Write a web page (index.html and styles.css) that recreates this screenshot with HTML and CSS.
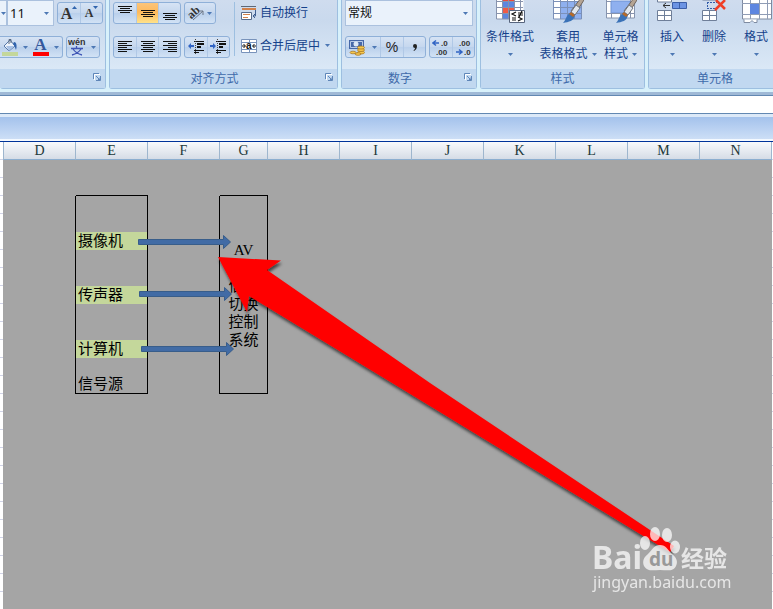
FILE: index.html
```html
<!DOCTYPE html>
<html lang="zh-CN">
<head>
<meta charset="utf-8">
<title>工作表</title>
<link rel="stylesheet" href="styles.css">
</head>
<body>
<svg class="defs" aria-hidden="true">
  <symbol id="drop" viewBox="0 0 5 3"><path d="M0 0h5L2.5 3z" fill="#4d78b4"/></symbol>
  <symbol id="launch" viewBox="0 0 8 8"><path d="M.5 6V.5H6" fill="none" stroke="#5f86b8"/><path d="M1.500 7V1.500H7" fill="none" stroke="#fff"/><path d="M3 3l3 3M7.500 3v4.500H3M5 6.500h2V4.500" fill="none" stroke="#5f86b8"/></symbol>
</svg>
<div class="ribbon">
  <section class="group font">
    <div class="tools">
      <div class="row">
        <button class="combo stub" aria-label="字体"><svg class="drop"><use href="#drop"/></svg></button>
        <label class="combo size"><select aria-label="字号"><option>11</option></select><svg class="drop"><use href="#drop"/></svg></label>
        <div class="seg wide">
          <button aria-label="增大字号"><b class="grow">A</b><svg class="tri" viewBox="0 0 5 3"><path d="M0 3h5L2.500 0z" fill="#3164ad"/></svg></button>
          <button aria-label="减小字号"><b class="shrink">A</b><svg class="tri" viewBox="0 0 5 3"><path d="M0 0h5L2.500 3z" fill="#3164ad"/></svg></button>
        </div>
      </div>
      <div class="row">
        <div class="seg open">
          <button aria-label="填充颜色"><svg width="18" height="18" viewBox="0 0 18 18"><path d="M3 8l6-6 5 6-6 5z" fill="#edf3fb" stroke="#5678a8"/><path d="M5 8h8l-5 5z" fill="#a8c2e6"/><path d="M8 6V1.500h2V5" fill="none" stroke="#5b6a80"/><path d="M13 4c3 0 3 5 2 8-1-2-1-4-3-6z" fill="#3164ad"/><path d="M1 14h16v4H1z" fill="#c4d79b"/></svg></button>
          <button class="mini" aria-label="填充颜色选项"><svg class="drop"><use href="#drop"/></svg></button>
          <button aria-label="字体颜色"><span class="ink">A</span></button>
          <button class="mini" aria-label="字体颜色选项"><svg class="drop"><use href="#drop"/></svg></button>
        </div>
        <div class="seg">
          <button class="pinyin" aria-label="拼音"><svg width="18" height="18" viewBox="0 0 18 18"><text x="0" y="7" class="wen">wén</text><path d="M3 10.500h12M8.500 8v2M5 11c2 3 5 5 9 6M13 11c-2 3-5 5-9 6" fill="none" stroke="#3f55b5" stroke-width="1.300"/></svg></button>
          <button class="mini" aria-label="拼音选项"><svg class="drop"><use href="#drop"/></svg></button>
        </div>
      </div>
    </div>
    <div class="caption"><button class="launch" aria-label="字体设置"><svg><use href="#launch"/></svg></button></div>
  </section>

  <section class="group align">
    <div class="tools cols">
      <div class="stack">
        <div class="row">
          <div class="seg wide">
            <button aria-label="顶端对齐"><svg width="16" height="16" viewBox="0 0 16 16"><path d="M1 1.500h14M3 3.500h10M1 5.500h14M3 7.500h10" stroke="#111"/></svg></button>
            <button class="on" aria-label="垂直居中"><svg width="16" height="16" viewBox="0 0 16 16"><path d="M1 5.500h14M3 7.500h10M1 9.500h14M3 11.500h10" stroke="#111"/></svg></button>
            <button aria-label="底端对齐"><svg width="16" height="16" viewBox="0 0 16 16"><path d="M1 8.500h14M3 10.500h10M1 12.500h14M3 14.500h10" stroke="#111"/></svg></button>
          </div>
          <div class="seg">
            <button class="orient" aria-label="方向"><svg width="28" height="20" viewBox="0 0 28 20"><text x="2" y="14" transform="rotate(-42 7 11)" class="ab">ab</text><path d="M7 17l10-9M13 8h4v4" fill="none" stroke="#6d7686"/><path d="M21 9h5l-2.500 3z" fill="#4d78b4"/></svg></button>
          </div>
        </div>
        <div class="row">
          <div class="seg wide">
            <button aria-label="左对齐"><svg width="16" height="16" viewBox="0 0 16 16"><path d="M1 2.500h14M1 4.500h9M1 6.500h14M1 8.500h9M1 10.500h14M1 12.500h9" stroke="#111"/></svg></button>
            <button aria-label="居中"><svg width="16" height="16" viewBox="0 0 16 16"><path d="M1 2.500h14M3 4.500h10M1 6.500h14M3 8.500h10M1 10.500h14M3 12.500h10" stroke="#111"/></svg></button>
            <button aria-label="右对齐"><svg width="16" height="16" viewBox="0 0 16 16"><path d="M1 2.500h14M6 4.500h9M1 6.500h14M6 8.500h9M1 10.500h14M6 12.500h9" stroke="#111"/></svg></button>
          </div>
          <div class="seg wide">
            <button aria-label="减少缩进"><svg width="17" height="16" viewBox="0 0 17 16"><path d="M6 2.500h10M6 11.500h10M6 13.500h5" stroke="#111"/><path d="M9 5h7M9 8h4" stroke="#111" stroke-width="2"/><path d="M7.500 0v16" stroke="#444" stroke-dasharray="1 1"/><path d="M0 7l3-3v2h3v2H3v2z" fill="#3164c4"/></svg></button>
            <button aria-label="增加缩进"><svg width="17" height="16" viewBox="0 0 17 16"><path d="M6 2.500h10M6 11.500h10M6 13.500h5" stroke="#111"/><path d="M9 5h7M9 8h4" stroke="#111" stroke-width="2"/><path d="M7.500 0v16" stroke="#444" stroke-dasharray="1 1"/><path d="M6 7L3 4v2H0v2h3v2z" fill="#3164c4"/></svg></button>
          </div>
        </div>
      </div>
      <div class="stack sep">
        <div class="row"><button class="text"><svg width="16" height="16" viewBox="0 0 16 16"><path d="M0 1.500h15" stroke="#5d6878"/><path d="M1 4h14" stroke="#d2824c" stroke-width="2"/><path d="M.5 7.500h10v7H.5z" fill="#fff" stroke="#566b8a"/><path d="M2 9.500h7M2 12.500h5" stroke="#d2824c"/><path d="M14.500 5v6h-2M14 9l-2 2 2 2" fill="none" stroke="#3f5f91"/></svg>自动换行</button></div>
        <div class="row"><button class="text"><svg width="16" height="16" viewBox="0 0 16 16"><path d="M.5 1.500h15v13H.5zM.5 4.500h15M.5 11.500h15M8.500 1.500v3M8.500 11.500v3" fill="#fff" stroke="#7893bb"/><path d="M1 8h3M12 8h3M2.500 6l2 2-2 2M13.500 6l-2 2 2 2" fill="none" stroke="#111"/><text x="5" y="11" class="tiny">a</text></svg>合并后居中<svg class="drop"><use href="#drop"/></svg></button></div>
      </div>
    </div>
    <div class="caption has-launch">对齐方式<button class="launch" aria-label="对齐设置"><svg><use href="#launch"/></svg></button></div>
  </section>

  <section class="group number">
    <div class="tools">
      <div class="row"><label class="combo format"><select aria-label="数字格式"><option>常规</option></select><svg class="drop"><use href="#drop"/></svg></label></div>
      <div class="row">
        <div class="seg wide">
          <button aria-label="会计数字格式"><svg width="18" height="18" viewBox="0 0 18 18"><path d="M1 2h15v9H1z" fill="#4668a8"/><path d="M2.500 3.500h12v6h-12z" fill="none" stroke="#b9cbe8"/><circle cx="8" cy="6" r="2.500" fill="#dce7f6"/><g fill="#f6c74d" stroke="#a2701b" stroke-width=".7"><ellipse cx="13" cy="14.500" rx="3.500" ry="1.500"/><ellipse cx="13" cy="12" rx="3.500" ry="1.500"/><ellipse cx="13" cy="9.500" rx="3.500" ry="1.500"/><ellipse cx="5" cy="14.500" rx="3" ry="1.300"/><ellipse cx="10" cy="16" rx="3" ry="1.300"/></g></svg></button>
          <button class="mini" aria-label="会计格式选项"><svg class="drop"><use href="#drop"/></svg></button>
          <button class="percent">%</button>
          <button class="comma" aria-label="千位分隔样式"><svg width="8" height="10" viewBox="0 0 8 10"><path d="M4 2a2 2 0 0 1 2 2c0 2-1 4-3 5l-.5-.7C3.500 7.500 4 7 4 6a2 2 0 0 1 0-4z" fill="#222"/></svg></button>
        </div>
        <div class="seg wide">
          <button aria-label="增加小数位数"><svg width="18" height="18" viewBox="0 0 18 18"><path d="M1 5h6M4 2.500L1 5l3 2.500" fill="none" stroke="#3164c4" stroke-width="1.500"/><text x="9" y="8" class="dec">.0</text><text x="4" y="17" class="dec">.00</text></svg></button>
          <button aria-label="减少小数位数"><svg width="18" height="18" viewBox="0 0 18 18"><text x="4" y="8" class="dec">.00</text><text x="9" y="17" class="dec">.0</text><path d="M1 14h6M4 11.500L7 14l-3 2.500" fill="none" stroke="#3164c4" stroke-width="1.500"/></svg></button>
        </div>
      </div>
    </div>
    <div class="caption has-launch">数字<button class="launch" aria-label="数字设置"><svg><use href="#launch"/></svg></button></div>
  </section>

  <section class="group style">
    <div class="tools big">
      <button class="tile"><svg width="32" height="23" viewBox="0 0 32 23"><path d="M2.500-6h27v25h-27z" fill="#fff"/><path d="M8-3h12v5H8z" fill="#e8493c"/><path d="M8 2h12v6H8z" fill="#5d86e0"/><path d="M8 8h12v5H8z" fill="#ef5a46"/><path d="M8 13h7v6H8z" fill="#5d86e0"/><path d="M2.500 0v19h20M8.500 0v19M14.500 0v19M20.500 0v19M26.500 0v12M2 1.500h27M2 7.500h27M2 13.500h20" fill="none" stroke="#8793ad"/><path d="M15.500 10.500h15v12h-15z" fill="#fff" stroke="#56647d"/><path d="M22 12l-4 2 4 2M18 18h4M18 20h4M24 13h5M24 15h5M28 11l-3 6M24 17l4 2-4 2" fill="none" stroke="#111" stroke-width="1.200"/></svg><span>条件格式</span><svg class="drop low"><use href="#drop"/></svg></button>
      <button class="tile wider"><svg width="32" height="23" viewBox="0 0 32 23"><path d="M1.500-3h28v22h-28z" fill="#fff"/><path d="M8 1h22v18H8z" fill="#8fb0ef"/><path d="M1.500 0v19h28V0M8.500 0v19M15.500 0v19M22.500 0v19M1 1.500h28M1 7.500h28M1 13.500h28" fill="none" stroke="#7b90b8"/><path d="M29-2l3 2-9 14-4-3z" fill="#b5a493" stroke="#6f655e"/><path d="M24 5l4 3-5 7-4-3z" fill="#e2e6ec" stroke="#6c7480"/><path d="M19 12l4 3c-1 6-6 7-12 8 3-3 3-8 8-11z" fill="#3b72b7"/><path d="M19 12l4 3-2 2-4-3z" fill="#b86a28"/></svg><span>套用</span><span>表格格式<svg class="drop"><use href="#drop"/></svg></span></button>
      <button class="tile narrow"><svg width="32" height="23" viewBox="0 0 32 23"><path d="M1.500-3h28v21h-28z" fill="#fff" stroke="#8694ae"/><path d="M6 1h19v12H6z" fill="#8fb0ef" stroke="#6f92d4"/><path d="M1 1.500h5M1 13.500h28M6.500 13v5M25.500 0v18M15.500 13v5" stroke="#8793ad"/><path d="M29-2l3 2-9 14-4-3z" fill="#b5a493" stroke="#6f655e"/><path d="M24 5l4 3-5 7-4-3z" fill="#e2e6ec" stroke="#6c7480"/><path d="M19 12l4 3c-1 6-6 7-12 8 3-3 3-8 8-11z" fill="#3b72b7"/><path d="M19 12l4 3-2 2-4-3z" fill="#b86a28"/></svg><span>单元格</span><span>样式<svg class="drop"><use href="#drop"/></svg></span></button>
    </div>
    <div class="caption">样式</div>
  </section>

  <section class="group cells">
    <div class="tools big">
      <button class="tile cell"><svg width="32" height="23" viewBox="0 0 32 23"><path d="M1.500-4v6h14v-6M1.500 10.500h14v10h-14zM1.500 15.500h14M8.500 10v10" fill="#fff" stroke="#6f7f99"/><path d="M16.500 2.500h14v6h-14zM23.500 2v6" fill="#6c94e4" stroke="#3c5fa8"/><path d="M7 5.500h7M10 3L7 5.500 10 8" fill="none" stroke="#333"/></svg><span>插入</span><svg class="drop low"><use href="#drop"/></svg></button>
      <button class="tile cell"><svg width="32" height="23" viewBox="0 0 32 23"><path d="M4.500 10.500h14v10h-14zM4.500 15.500h14M11.500 10v10" fill="#fff" stroke="#6f7f99"/><path d="M4.500-4v4h14v-4" fill="#fff" stroke="#6f7f99"/><path d="M9 2.500h10M9 8.500h10M9.500 2v6" fill="none" stroke="#335ca8" stroke-dasharray="2 1"/><path d="M18 0l9 9M27 0L17 10" stroke="#ef3f27" stroke-width="2.500"/></svg><span>删除</span><svg class="drop low"><use href="#drop"/></svg></button>
      <button class="tile cell"><svg width="32" height="23" viewBox="0 0 32 23"><path d="M2.500-4h29v23h-29z" fill="#fff" stroke="#7f8ba1"/><path d="M2 3.500h29M2 14.500h29M10.500 0v19M19.500 0v19M27.500 0v19" stroke="#8f9cb5"/><path d="M10 4h9v10h-9z" fill="#5d86e0"/><path d="M4 19.500v3h6l2-2 2 2h3v-3" fill="#fff" stroke="#7f8ba1"/></svg><span>格式</span><svg class="drop low"><use href="#drop"/></svg></button>
    </div>
    <div class="caption">单元格</div>
  </section>
</div>
<div class="formula"></div>
<div class="titlebar"></div>
<main class="sheet">
  <div class="grid">
  <table>
    <colgroup><col class="first"><col class="w"><col class="w"><col class="g"><col class="w"><col class="w"><col class="w"><col class="w"><col class="w"><col class="w"><col></colgroup>
    <thead><tr><th>D</th><th>E</th><th>F</th><th>G</th><th>H</th><th>I</th><th>J</th><th>K</th><th>L</th><th>M</th><th>N</th></tr></thead>
    <tbody>
      <tr><td colspan="11"></td></tr>
      <tr><td></td><td class="b"></td><td></td><td class="b"></td><td colspan="7"></td></tr>
      <tr><td class="r"></td><td class="r"></td><td class="r"></td><td class="r b system" rowspan="11">AV<br><br>信号<br>切换<br>控制<br>系统</td><td colspan="7"></td></tr>
      <tr><td class="r"></td><td class="r"></td><td class="r"></td><td colspan="7"></td></tr>
      <tr><td class="r"></td><td class="r source">摄像机</td><td class="r"></td><td colspan="7"></td></tr>
      <tr><td class="r"></td><td class="r"></td><td class="r"></td><td colspan="7"></td></tr>
      <tr><td class="r"></td><td class="r"></td><td class="r"></td><td colspan="7"></td></tr>
      <tr><td class="r"></td><td class="r source">传声器</td><td class="r"></td><td colspan="7"></td></tr>
      <tr><td class="r"></td><td class="r"></td><td class="r"></td><td colspan="7"></td></tr>
      <tr><td class="r"></td><td class="r"></td><td class="r"></td><td colspan="7"></td></tr>
      <tr><td class="r"></td><td class="r source">计算机</td><td class="r"></td><td colspan="7"></td></tr>
      <tr><td class="r"></td><td class="r"></td><td class="r"></td><td colspan="7"></td></tr>
      <tr><td class="r"></td><td class="r b">信号源</td><td class="r"></td><td colspan="7"></td></tr>
    </tbody>
  </table>
  </div>
  <svg class="shapes" viewBox="0 142 773 467" aria-hidden="true">
    <defs><filter id="shade" x="-5%" y="-5%" width="110%" height="115%"><feDropShadow dx="1" dy="3" stdDeviation="1.500" flood-color="#000" flood-opacity=".6"/></filter></defs>
    <g fill="#416ba5" stroke="#385d8a">
      <path d="M138.500 239.500h85v-4l7 6.500-7 6.500v-4h-85z"/>
      <path d="M139.500 291.500h85v-4l7 6.500-7 6.500v-4h-85z"/>
      <path d="M141.500 346.500h85v-4l7 6.500-7 6.500v-4h-85z"/>
    </g>
    <path d="M218 257L281 260.500 267 270 430 383 650 530 674 546 670 552 650 540 430 406 249 296 247 312z" fill="#f00" filter="url(#shade)"/>
  </svg>
  <svg class="mark" width="150" height="80" viewBox="585 520 150 80">
    <g fill="#fff" opacity=".72">
      <text x="592" y="569" class="bai">Bai</text>
      <ellipse cx="645" cy="543" rx="5" ry="7"/><ellipse cx="655" cy="534" rx="5" ry="7"/><ellipse cx="667" cy="535" rx="5" ry="7"/><ellipse cx="675" cy="547" rx="5" ry="6.500"/>
      <path d="M660 545c6 0 8 5 12 9 5 4 6 8 4 12-3 6-9 4-16 4s-12 2-16-4c-2-5 0-9 4-12 4-4 6-9 12-9z"/>
      <text x="681" y="567" class="jy">经验</text>
      <text x="593" y="588" class="url">jingyan.baidu.com</text>
    </g>
    <text x="649" y="566" class="du">du</text>
  </svg>
</main>
</body>
</html>
```
FILE: styles.css
```css
* { box-sizing: border-box; }

body {
  margin: 0;
  min-height: 100vh;
  display: flex;
  flex-direction: column;
  overflow: hidden;
  background: #fff;
  color: #15428b;
  font: 12px/17px "Liberation Sans", "Noto Sans CJK SC", sans-serif;
}

.defs { position: absolute; width: 0; height: 0; }

button, select {
  margin: 0;
  padding: 0;
  border: 0;
  background: none;
  color: inherit;
  font: inherit;
  appearance: none;
}

/* Ribbon */
.ribbon {
  display: flex;
  gap: 3px;
  overflow: hidden;
  padding-bottom: 3px;
  background: #d8f1fb;
}

.group {
  flex: none;
  display: flex;
  flex-direction: column;
  border: 1px solid #9dbfe0;
  border-top: 0;
  border-radius: 0 0 3px 3px;
  background: linear-gradient(#cfdcee, #c9d9ed 20px, #dae8f6 69px);
}
.font { width: 106px; border-left: 0; }
.align { width: 229px; }
.number { width: 136px; }
.style { width: 165px; }
.cells { flex: 1 0 134px; }

.tools {
  height: 69px;
  padding: 2px 3px 0;
  display: flex;
  flex-direction: column;
  gap: 12px;
}
.font .tools { padding: 2px 3px 0 0; }
.tools.cols { flex-direction: row; gap: 4px; }
.stack { display: flex; flex-direction: column; gap: 12px; }
.row { height: 22px; display: flex; align-items: center; gap: 3px; }
.sep { height: 54px; padding-left: 6px; border-left: 1px solid #9dbfe0; }
.align .stack:first-child { width: 117px; }

.caption {
  position: relative;
  height: 19px;
  background: #c1d8f0;
  color: #3e6aaa;
  text-align: center;
  line-height: 20px;
}
.has-launch { padding-right: 18px; }
.launch { position: absolute; right: 4px; top: 4px; width: 8px; height: 8px; }
.launch svg { display: block; width: 8px; height: 8px; }

.drop { width: 5px; height: 3px; flex: none; }

.seg {
  flex: none;
  display: flex;
  height: 22px;
  border: 1px solid #8fb0d8;
  border-radius: 3px;
  background: linear-gradient(#d6e3f4, #c5d7ee 50%, #b9cfeb 50%, #d2e2f5);
}
.seg button {
  display: flex;
  align-items: center;
  justify-content: center;
  height: 20px;
  width: 20px;
}
.seg svg { flex: none; }
.wide button { width: 22px; }
.wide button + button { border-left: 1px solid #b0c8e6; }
.seg .mini { width: 12px; border-left: 0; }
.seg .on { background: linear-gradient(#fbc47b, #fdb95c 45%, #ffe28a); }
.open { border-left: 0; border-radius: 0 3px 3px 0; }
.open button { width: 19px; }
.seg .orient { width: 30px; }

.grow, .shrink { font-family: "Liberation Serif", serif; color: #333; }
.grow { font-size: 16px; }
.shrink { font-size: 12px; }
.tri { width: 5px; height: 3px; align-self: flex-start; margin-top: 3px; }
.ink {
  width: 16px;
  height: 18px;
  border-bottom: 4px solid #f00;
  font: bold 17px/14px "Liberation Serif", serif;
  color: #34589c;
}
.wen { font: bold 9px "Liberation Sans", sans-serif; fill: #333; }
.ab { font: bold 12px "Liberation Serif", serif; fill: #333; }
.tiny { font: bold 10px "Liberation Sans", sans-serif; fill: #111; }
.dec { font: bold 8px "Liberation Sans", sans-serif; fill: #333; }
.number .seg .percent { width: 23px; font-size: 14px; color: #222; }
.number .seg .comma { width: 22px; }

.combo {
  flex: none;
  display: flex;
  align-items: center;
  justify-content: space-between;
  height: 26px;
  padding: 0 4px;
  border: 1px solid #abc1de;
  background: #eaf2fb;
  color: #111;
}
.combo select { flex: 1; font-size: 12px; line-height: 20px; }
.stub { width: 7px; margin-right: -3px; padding: 0 1px; border-left: 0; }
.size { width: 47px; padding-left: 2px; }
.combo.size select { font: 13px/20px "Noto Sans", sans-serif; }
.format { width: 128px; padding-left: 2px; }

.text { display: flex; align-items: center; gap: 3px; white-space: nowrap; line-height: 18px; }
.text .drop { margin-left: 2px; }

.tools.big { flex-direction: row; gap: 0; padding: 0 2px; }
.tile {
  flex: none;
  width: 54px;
  display: flex;
  flex-direction: column;
  align-items: center;
  white-space: nowrap;
}
.tile > svg:first-child { margin-bottom: 6px; }
.tile span { display: flex; align-items: center; gap: 4px; line-height: 17px; }
.wider { width: 62px; }
.narrow { width: 43px; }
.cell { width: 42px; }
.low { margin-top: 7px; }

/* Strips between the ribbon and the sheet */
.formula {
  height: 22px;
  border-top: 3px solid #9fb9d6;
  border-bottom: 1px solid #6288b2;
  background: #fff;
  box-shadow: inset 0 1px #6288b2;
}
.titlebar {
  height: 28px;
  border-top: 3px solid #dce9f8;
  border-bottom: 1px solid #039;
  background: linear-gradient(#a4c2ec, #d0e1f7);
  box-shadow: inset 0 -2px #f4f9ff;
}

/* Sheet */
.sheet {
  position: relative;
  flex: 1;
  display: flex;
  overflow: hidden;
  padding: 0 1px 0 3px;
  background: repeating-linear-gradient(#fff 0 17px, #d0d3e6 17px 18px);
}
.grid { flex: 1; background: #a5a5a5; }
table {
  table-layout: fixed;
  border-spacing: 0;
  width: 100%;
  color: #000;
}
.first { width: 73px; }
.w { width: 72px; }
.g { width: 48px; }
th {
  height: 18px;
  padding: 0;
  border-right: 1px solid #9eb6ce;
  border-bottom: 1px solid #8caecf;
  background: linear-gradient(#f8fafc, #d5dce6);
  color: #203838;
  font: 14px/17px "Liberation Serif", serif;
}
th:first-child { border-left: 1px solid #9eb6ce; }
td {
  height: 18px;
  padding: 0 0 0 2px;
  font: 15px/17px "Liberation Serif", "Noto Sans CJK SC", sans-serif;
  white-space: nowrap;
}
.r { border-right: 1px solid #000; }
.b { border-bottom: 1px solid #000; }
.source { background: #c4d79b; }
.system { padding: 0; text-align: center; line-height: 18px; }

.shapes { position: absolute; left: 0; top: 0; width: 773px; height: 467px; }
.mark { position: absolute; right: 38px; bottom: 9px; }
.bai { font: bold 32px "Noto Sans", sans-serif; }
.jy { font: bold 23px "Noto Sans CJK SC", sans-serif; }
.url { font: 16px "Noto Sans", sans-serif; }
.du { font: bold 19px "Noto Sans", sans-serif; fill: #999; }
```
